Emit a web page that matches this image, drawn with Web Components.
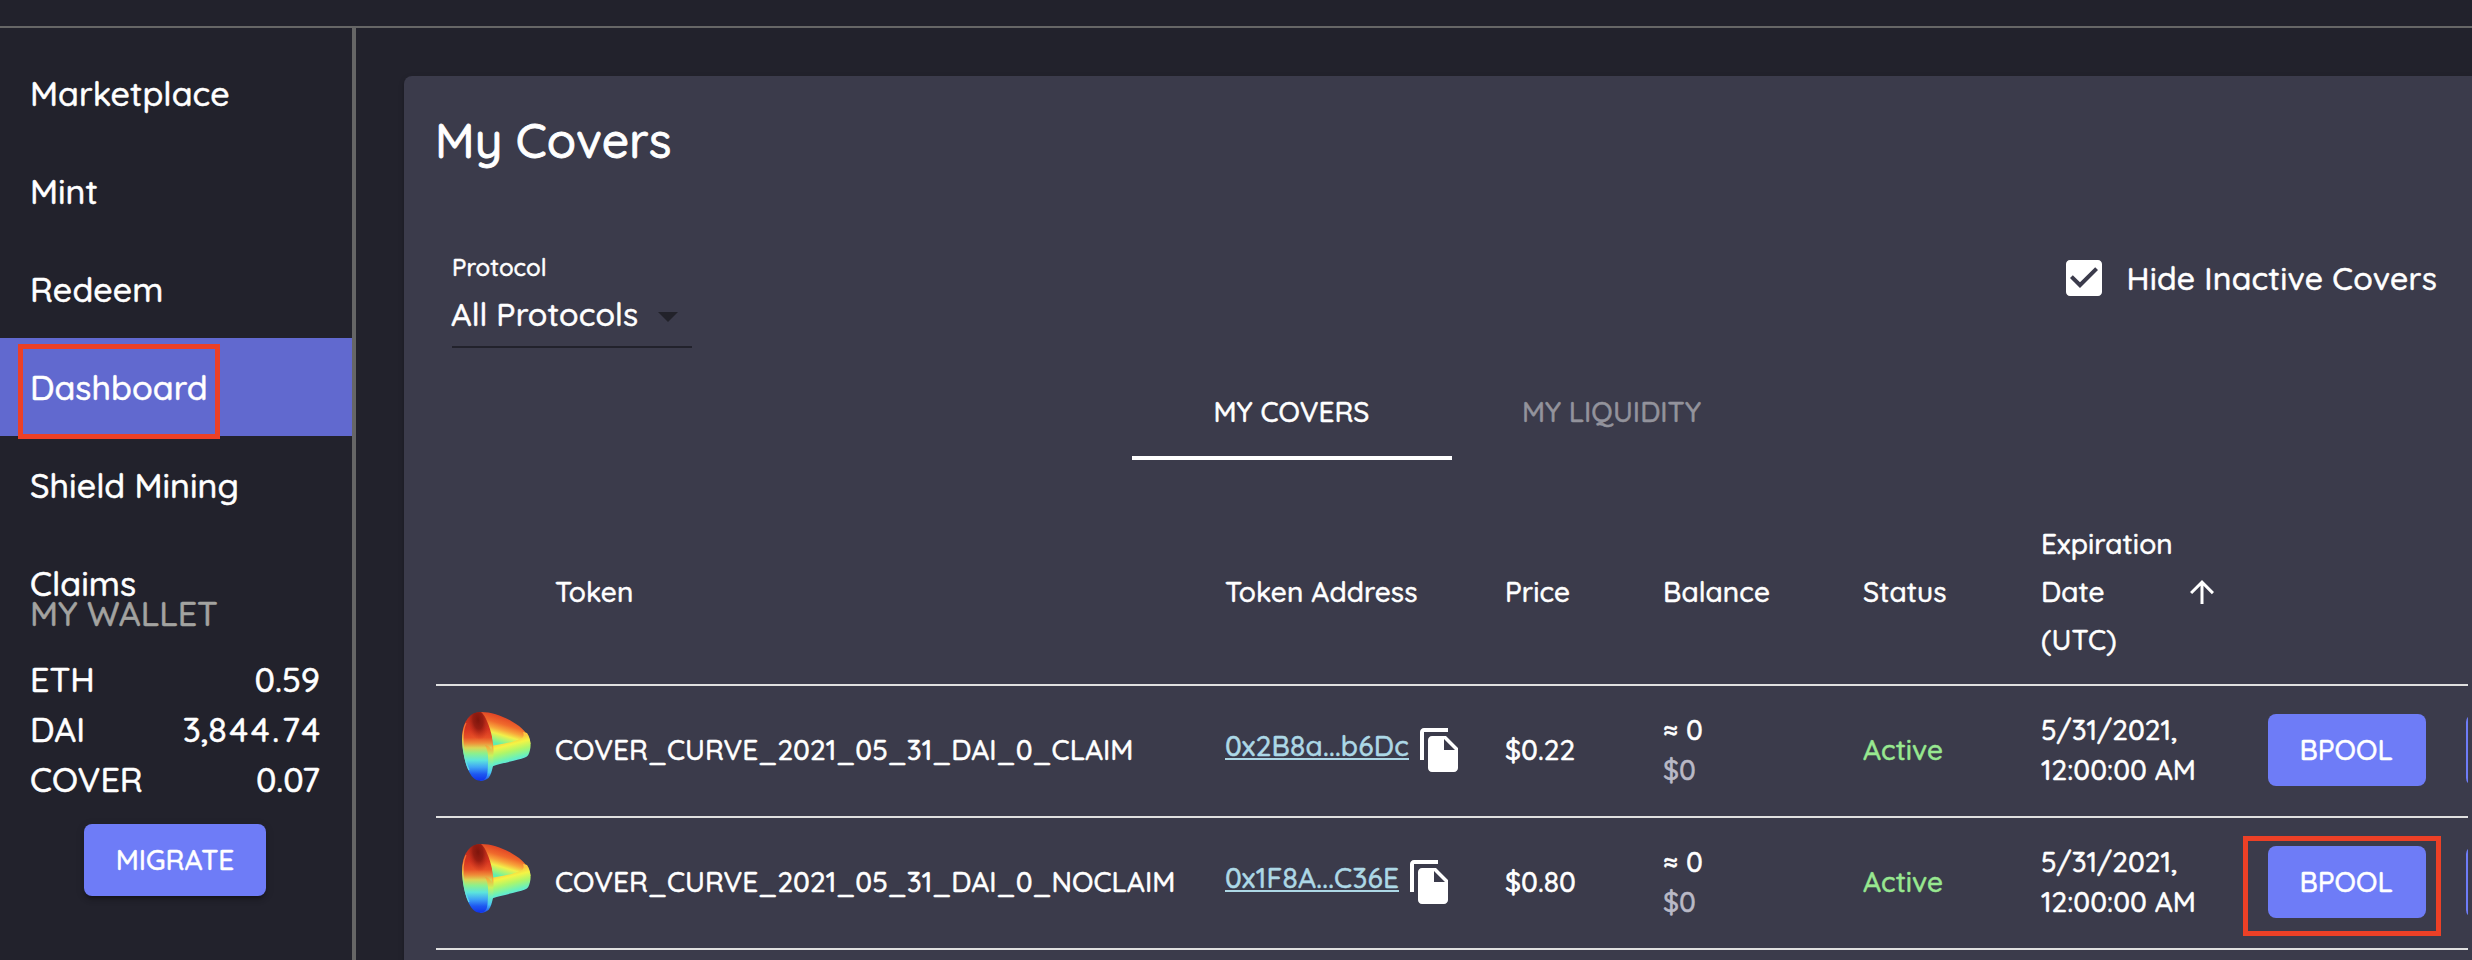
<!DOCTYPE html>
<html lang="en">
<head>
<meta charset="utf-8">
<title>My Covers</title>
<style>
  html, body { margin: 0; height: 100%; background: #22222c; overflow: hidden; }
  body { font-family: Quicksand, Lato, sans-serif; font-weight: 500; font-size: 28px; color: #fff; letter-spacing: .04px; -webkit-text-stroke-width: .5px; }
</style>
</head>
<body>
<cover-app></cover-app>
<script>
const define = (name, html) => {
  const template = document.createElement('template');
  template.innerHTML = html;
  customElements.define(name, class extends HTMLElement {
    constructor() {
      super();
      this.attachShadow({ mode: 'open' }).append(template.content.cloneNode(true));
    }
  });
};

define('nav-item', `
<style>
  :host { display: flex; align-items: center; height: 98px; padding-left: 30px; box-sizing: border-box; font-size: 34px; position: relative; }
  :host([active]) { background: #6169cf; }
  .mark { display: none; position: absolute; left: 18px; top: 6px; width: 192px; height: 85px; border: 5px solid #ec4026; }
  :host([active]) .mark { display: block; }
</style><slot></slot><div class="mark"></div>`);

define('wallet-row', `
<style>
  :host { display: flex; justify-content: space-between; height: 50px; line-height: 50px; font-size: 34px; }
</style><span><slot></slot></span><span class="amount"><slot name="amount"></slot></span>`);

define('fill-button', `
<style>
  :host { display: flex; align-items: center; justify-content: center; height: 72px; padding-bottom: 1px; border-radius: 8px; background: #6e7cf7; font-size: 28px; box-sizing: border-box; }
  :host([raised]) { box-shadow: 0 6px 2px -4px rgba(0,0,0,.2), 0 4px 4px rgba(0,0,0,.14), 0 2px 10px rgba(0,0,0,.12); }
</style><slot></slot>`);

define('side-bar', `
<style>
  :host { display: block; width: 352px; border-right: 4px solid #666; padding-top: 16px; box-sizing: content-box; }
  .wallet { margin-top: -42px; padding: 0 32px 0 30px; position: relative; }
  h2 { margin: 0 0 17px; font: inherit; font-size: 34px; line-height: 48px; color: #a3a3a0; }
  .wide { letter-spacing: 2.8px; margin-right: -2.8px; }
  fill-button { width: 182px; margin: 19px 0 0 54px; }
</style>
<nav>
  <nav-item>Marketplace</nav-item>
  <nav-item>Mint</nav-item>
  <nav-item>Redeem</nav-item>
  <nav-item active>Dashboard</nav-item>
  <nav-item>Shield Mining</nav-item>
  <nav-item>Claims</nav-item>
</nav>
<div class="wallet">
  <h2>MY WALLET</h2>
  <wallet-row>ETH<span slot="amount">0.59</span></wallet-row>
  <wallet-row>DAI<span slot="amount">3,<span class="wide">844.74</span></span></wallet-row>
  <wallet-row>COVER<span slot="amount">0.07</span></wallet-row>
  <fill-button raised>MIGRATE</fill-button>
</div>`);

define('protocol-select', `
<style>
  :host { display: block; width: 240px; }
  .label { font-size: 24px; line-height: 30px; }
  .value { display: flex; align-items: center; height: 64px; border-bottom: 2px solid #22222c; font-size: 32px; }
  .value span { margin-left: -1px; letter-spacing: .1px; }
  svg { margin-left: auto; margin-right: 14px; margin-top: 6px; }
</style>
<div class="label">Protocol</div>
<div class="value"><span>All Protocols</span><svg width="20" height="10"><path d="M0 0H20L10 10Z" fill="#22222a"/></svg></div>`);

define('check-option', `
<style>
  :host { display: flex; align-items: center; gap: 18px; height: 48px; font-size: 32px; letter-spacing: .2px; }
  svg { display: block; }
</style>
<svg width="48" height="48" viewBox="0 0 24 24"><path fill="#fff" d="M19 3H5c-1.11 0-2 .9-2 2v14c0 1.1.89 2 2 2h14c1.11 0 2-.9 2-2V5c0-1.1-.89-2-2-2zm-9 14l-5-5 1.41-1.41L10 14.17l7.59-7.59L19 8l-9 9z"/></svg>
<span><slot></slot></span>`);

define('tab-item', `
<style>
  :host { display: flex; align-items: center; justify-content: center; width: 320px; height: 96px; padding: 0 1px 2px 0; box-sizing: border-box; color: #93939c; font-size: 28px; position: relative; }
  :host([selected]) { color: #fff; }
  :host([selected])::after { content: ""; position: absolute; left: 0; right: 0; bottom: 0; height: 4px; background: #fff; }
</style><slot></slot>`);

define('curve-logo', `
<style>:host { display: block; width: 90px; height: 90px; } svg { display: block; }</style>
<svg width="90" height="90" viewBox="0 0 90 90">
  <defs>
    <linearGradient id="back" gradientUnits="userSpaceOnUse" x1="58" y1="14" x2="50" y2="41">
      <stop offset="0" stop-color="#e04224"/><stop offset=".28" stop-color="#f0692c"/><stop offset=".48" stop-color="#f8a53a"/><stop offset=".66" stop-color="#f2f04a"/><stop offset=".85" stop-color="#a0f57c"/><stop offset="1" stop-color="#62efae"/>
    </linearGradient>
    <linearGradient id="band" gradientUnits="userSpaceOnUse" x1="55" y1="36" x2="61" y2="59">
      <stop offset="0" stop-color="#fac840"/><stop offset=".22" stop-color="#f4f445"/><stop offset=".5" stop-color="#aef66a"/><stop offset=".78" stop-color="#6ff2b4"/><stop offset="1" stop-color="#55e2ee"/>
    </linearGradient>
    <linearGradient id="lobe" gradientUnits="userSpaceOnUse" x1="0" y1="8" x2="0" y2="77">
      <stop offset="0" stop-color="#b52a18"/><stop offset=".25" stop-color="#d63420"/><stop offset=".37" stop-color="#e75027"/><stop offset=".45" stop-color="#ef8d38"/><stop offset=".52" stop-color="#d9d856"/><stop offset=".6" stop-color="#8cf08c"/><stop offset=".7" stop-color="#5ce5dc"/><stop offset=".8" stop-color="#3fa4f5"/><stop offset=".9" stop-color="#1e58f0"/><stop offset="1" stop-color="#1030e8"/>
    </linearGradient>
    <linearGradient id="rim" gradientUnits="userSpaceOnUse" x1="0" y1="34" x2="0" y2="76">
      <stop offset="0" stop-color="#e0502c"/><stop offset=".22" stop-color="#f5b03f"/><stop offset=".42" stop-color="#c8f25c"/><stop offset=".64" stop-color="#69efc2"/><stop offset=".82" stop-color="#4cc8f2"/><stop offset="1" stop-color="#2050f0"/>
    </linearGradient>
    <radialGradient id="dark" gradientUnits="userSpaceOnUse" cx="0" cy="0" r="1" gradientTransform="translate(26 16) rotate(-8) scale(11 20)">
      <stop offset="0" stop-color="#7d150c"/><stop offset=".45" stop-color="#8d1a10" stop-opacity=".85"/><stop offset="1" stop-color="#c02c1a" stop-opacity="0"/>
    </radialGradient>
    <linearGradient id="edge" gradientUnits="userSpaceOnUse" x1="0" y1="12" x2="0" y2="60">
      <stop offset="0" stop-color="#e8432a"/><stop offset=".3" stop-color="#f58a38"/><stop offset=".5" stop-color="#e8ea50"/><stop offset=".75" stop-color="#7ff0a0"/><stop offset="1" stop-color="#5ce0ea"/>
    </linearGradient>
  </defs>
  <path fill="url(#back)" d="M27 8C38 7.500 50 11.500 60 17.500C70 23 78 31 78.500 40L60 44L38 44Z"/>
  <path fill="url(#band)" d="M37 43C46 40 60 39.500 70 34C72 32.500 72 30 71 28L75 29C78 33 79.500 40 78 46C77 50 76 52.500 73 53.500C65 56.500 48 59.500 41.500 62L37 64Z"/>
  <path fill="url(#rim)" d="M34 20C40 30 42 41 41.500 49C41 53 41.500 58 41 62C40 66 39 71 36.500 74C34 76 31 77 28 77L32 40Z"/>
  <path fill="url(#lobe)" d="M10 32C11 17 18 8 29 8C33 12 38 22 40 33C40.500 37 40.500 41 39.500 46C38 43 36 41.500 33 41C36 46 36.500 53 36 60C35.500 67 36 72 33 75C31 77 25 78 21 73.500C17 69.500 14 61 12.500 54C11 47 10 40 10 32Z"/>
  <path fill="url(#dark)" d="M11 27C13 15 18 8 29 8C34 12 38 22 40 33L38 38L12 38Z"/>
  <path fill="none" stroke="url(#edge)" stroke-width="1.200" d="M14 19C10 27 10.500 38 11.500 46C12.500 53 14 60 17 66"/>
</svg>`);

define('cover-row', `
<style>
  :host { display: grid; grid-template-columns: 95px 670px 280px 158px 200px 178px 227px 198px 100px; align-items: center; height: 132px; padding: 0 0 2px 24px; box-sizing: border-box; border-bottom: 2px solid #e0e0e0; line-height: 40px; overflow: hidden; }
  curve-logo { margin: -2px 0 0 -8px; }
  .address { display: flex; align-items: center; height: 48px; }
  a { color: #add8e6; border-bottom: 2px solid #add8e6; line-height: 25px; margin-bottom: 7px; letter-spacing: .25px; }
  .address svg { margin-left: 7px; }
  .dim { color: #b9b9c6; }
  .status { color: #98e890; }
  .pool { position: relative; width: 158px; }
  .pool fill-button { padding-right: 2px; }
  .mark { display: none; position: absolute; left: -25px; top: -10px; width: 188px; height: 90px; border: 5px solid #ec4026; }
  :host([marked]) .mark { display: block; }
</style>
<curve-logo></curve-logo>
<span><slot name="token"></slot></span>
<span class="address"><a><slot name="address"></slot></a><svg width="48" height="48" viewBox="0 0 24 24"><path fill="#fff" d="M16 1H4c-1.1 0-2 .9-2 2v14h2V3h12V1zm-1 4l6 6v10c0 1.100-.9 2-2 2H7.990C6.890 23 6 22.100 6 21l.01-14c0-1.100.89-2 1.990-2h7zm-1 7h5.500L14 6.500V12z"/></svg></span>
<span><slot name="price"></slot></span>
<span>≈ 0<br><span class="dim">$0</span></span>
<span class="status">Active</span>
<span>5/31/2021,<br>12:00:00 AM</span>
<div class="pool"><fill-button>BPOOL</fill-button><div class="mark"></div></div>
<fill-button></fill-button>`);

define('cover-table', `
<style>
  :host { display: block; }
  .head { display: grid; grid-template-columns: 765px 280px 158px 200px 178px 400px; align-items: center; height: 186px; padding: 0 0 0 24px; box-sizing: border-box; border-bottom: 2px solid #e0e0e0; line-height: 48px; letter-spacing: .1px; }
  .token { padding-left: 95px; }
  .sort { display: flex; align-items: center; }
  .sort span { width: 143px; }
</style>
<div class="head">
  <span class="token">Token</span><span>Token Address</span><span>Price</span><span>Balance</span><span>Status</span>
  <div class="sort"><span>Expiration Date (UTC)</span><svg width="36" height="36" viewBox="0 0 24 24"><path fill="#fff" d="M4 12l1.410 1.410L11 7.830V20h2V7.830l5.580 5.590L20 12l-8-8-8 8z"/></svg></div>
</div>
<cover-row><span slot="token">COVER_CURVE_2021_05_31_DAI_0_CLAIM</span><span slot="address">0x2B8a...b6Dc</span><span slot="price">$0.22</span></cover-row>
<cover-row marked><span slot="token">COVER_CURVE_2021_05_31_DAI_0_NOCLAIM</span><span slot="address">0x1F8A...C36E</span><span slot="price">$0.80</span></cover-row>`);

define('cover-panel', `
<style>
  :host { display: block; background: #3b3b4b; border-radius: 8px 0 0 0; padding: 36px 4px 0 32px; box-sizing: border-box; box-shadow: 0 4px 2px -2px rgba(0,0,0,.2), 0 2px 2px rgba(0,0,0,.14), 0 2px 6px rgba(0,0,0,.12); }
  h1 { margin: 0 0 0 -1px; font: inherit; font-size: 48px; line-height: 56px; letter-spacing: .1px; -webkit-text-stroke-width: .8px; }
  .filters { display: flex; justify-content: space-between; padding: 84px 31px 0 16px; height: 96px; }
  check-option { margin-top: 2px; }
  .tabs { display: flex; justify-content: center; padding-top: 16px; height: 112px; margin-bottom: 24px; }
</style>
<h1>My Covers</h1>
<div class="filters"><protocol-select></protocol-select><check-option>Hide Inactive Covers</check-option></div>
<div class="tabs"><tab-item selected>MY COVERS</tab-item><tab-item>MY LIQUIDITY</tab-item></div>
<cover-table></cover-table>`);

define('cover-app', `
<style>
  :host { display: flex; flex-direction: column; height: 960px; overflow: hidden; }
  header { height: 26px; border-bottom: 2px solid #666; flex: none; }
  main { display: flex; flex: 1; min-height: 0; }
  side-bar { flex: none; }
  cover-panel { flex: 1; min-width: 0; margin: 48px 0 0 48px; }
</style>
<header></header>
<main><side-bar></side-bar><cover-panel></cover-panel></main>`);
</script>
</body>
</html>
